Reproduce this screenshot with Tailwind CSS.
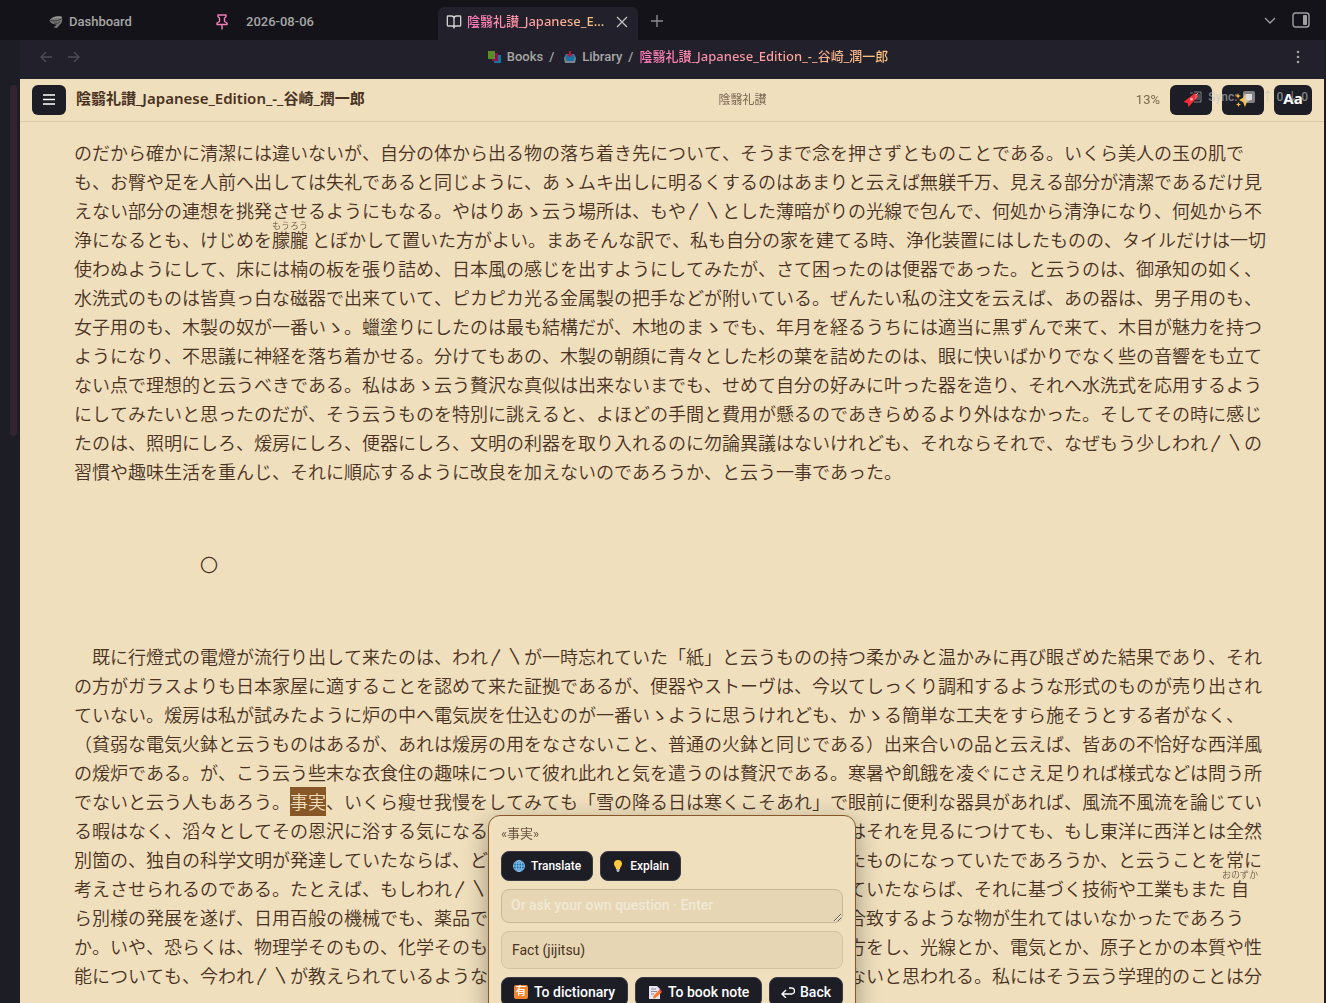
<!DOCTYPE html>
<html lang="ja">
<head>
    <meta charset="UTF-8">
    <meta name="viewport" content="width=device-width, initial-scale=1.0">
    <title>陰翳礼讃_Japanese_Edition_-_谷崎_潤一郎</title>
    <script src="https://cdn.jsdelivr.net/npm/@tailwindcss/browser@4"></script>
</head>
<body class="h-screen overflow-hidden bg-[#1d1d26] font-['Roboto','Noto_Sans_CJK_JP',sans-serif] text-[#a6a6a6]">
    <div class="h-full flex flex-col">
        <!-- Tab bar -->
        <header class="h-10 shrink-0 flex items-end bg-[#141319] text-[13px] font-medium">
            <a href="#" class="w-[167px] h-9 ml-[49px] flex items-center gap-[6px]">
                <svg class="w-[14px] h-[14px]" viewBox="0 0 14 14">
                    <path d="M.5 5.500C2 2 7 .5 13 1.500c.5 4 0 7-2.500 8.500L8 13l-3.500-.5L8 9.500C5 9.500 1.500 8.500.5 5.500z" fill="#777"/>
                    <path d="M1.500 5.500c3 .8 7 .8 11-1.500M5 8c2 .5 4 .5 6-1" stroke="#3a3a3e" fill="none"/>
                    <path d="M4 3.300c2-1.200 5-1.300 8-1" stroke="#aaa" fill="none"/>
                </svg>
                Dashboard
            </a>
            <a href="#" class="w-[222px] h-9 flex items-center gap-[18px]">
                <svg class="w-[12px] h-[16px]" viewBox="0 0 12 16" fill="none" stroke="#f27fb8" stroke-width="1.400" stroke-linejoin="round" stroke-linecap="round">
                    <path d="M2 1h8v1.800L8.500 4v3.500L11 9v1.500H1V9l2.500-1.500V4L2 2.800zM6 10.500V15"/>
                </svg>
                2026-08-06
            </a>
            <div class="w-[200px] h-[33px] px-2 pb-1 flex items-center rounded-t-md bg-[#22212b]">
                <svg class="w-4 h-4 mr-[5px] shrink-0" viewBox="0 0 24 24" fill="none" stroke="#cfcfcf" stroke-width="2" stroke-linejoin="round" stroke-linecap="round">
                    <path d="M12 6v15M3 18a1 1 0 0 1-1-1V4a1 1 0 0 1 1-1h5a4 4 0 0 1 4 4 4 4 0 0 1 4-4h5a1 1 0 0 1 1 1v13a1 1 0 0 1-1 1h-6a3 3 0 0 0-3 3 3 3 0 0 0-3-3z"/>
                </svg>
                <a href="#" class="w-[138px] truncate font-['Noto_Sans','Noto_Sans_CJK_JP',sans-serif] bg-linear-to-r from-[#ff79b9] to-[#ffc57f] bg-clip-text text-transparent">陰翳礼讃_Japanese_Edition_-_谷崎_潤一郎</a>
                <button aria-label="Close tab" class="ml-auto">
                    <svg class="w-4 h-4" viewBox="0 0 16 16" stroke="#c0c0c0" stroke-width="1.300"><path d="M3 3l10 10M13 3L3 13"/></svg>
                </button>
            </div>
            <button aria-label="New tab" class="h-[38px] px-3">
                <svg class="w-[14px] h-[14px]" viewBox="0 0 14 14" stroke="#8b8b90" stroke-width="1.400"><path d="M7 1v12M1 7h12"/></svg>
            </button>
            <div class="h-10 ml-auto pr-4 flex items-center gap-4">
                <button aria-label="Tab list">
                    <svg class="w-3 h-3" viewBox="0 0 12 12" fill="none" stroke="#a0a0a0" stroke-width="1.300"><path d="M1 4l5 5 5-5"/></svg>
                </button>
                <button aria-label="Toggle sidebar">
                    <svg class="w-[18px] h-4" viewBox="0 0 18 16" fill="none" stroke="#a0a0a0" stroke-width="1.400">
                        <rect x="1" y="1" width="16" height="14" rx="2.500"/>
                        <rect x="11" y="3" width="4" height="10" rx="1" fill="#a0a0a0" stroke="none"/>
                    </svg>
                </button>
            </div>
        </header>

        <div class="flex-1 min-h-0 flex">
            <!-- Left rail -->
            <div class="w-5 shrink-0 flex justify-end items-start pt-[45px] pr-[3px]">
                <div class="w-[7px] h-[351px] rounded-full bg-[#33222f]"></div>
            </div>

            <div class="relative flex-1 min-w-0 flex flex-col mr-[2px]">
                <!-- Breadcrumbs -->
                <nav class="h-[39px] shrink-0 px-5 pb-[6px] flex items-center bg-[#22212b] text-[13px] font-medium">
                    <div class="w-48 flex gap-4">
                        <button aria-label="Back">
                            <svg class="w-3 h-3" viewBox="0 0 12 12" fill="none" stroke="#4d4c56" stroke-width="1.300"><path d="M12 6H1M6 1L1 6l5 5"/></svg>
                        </button>
                        <button aria-label="Forward">
                            <svg class="w-3 h-3" viewBox="0 0 12 12" fill="none" stroke="#4d4c56" stroke-width="1.300"><path d="M0 6h11M6 1l5 5-5 5"/></svg>
                        </button>
                    </div>
                    <div class="flex-1 flex justify-center items-center gap-[6px]">
                        <svg class="w-[13px] h-3" viewBox="0 0 13 12">
                            <path d="M6 4h7v8H6z" fill="#1573a5"/>
                            <path d="M4 2h6v8H4z" fill="#8c1248"/>
                            <path d="M0 0h7v8H0z" fill="#5b8c2a"/>
                        </svg>
                        <a href="#">Books</a>
                        <span>/</span>
                        <svg class="w-3 h-3 ml-1" viewBox="0 0 12 12">
                            <path d="M2 3h8l2 4-1 5H1L0 7z" fill="#7c858c"/>
                            <path d="M1.500 3.500h9V8L9 10H3L1.500 8z" fill="#1573a5"/>
                            <path d="M5 0h2v3h2L6 6.500 3 3h2z" fill="#b5173f"/>
                        </svg>
                        <a href="#">Library</a>
                        <span>/</span>
                        <span class="font-['Noto_Sans','Noto_Sans_CJK_JP',sans-serif] bg-linear-to-r from-[#ff79b9] to-[#ffc57f] bg-clip-text text-transparent">陰翳礼讃_Japanese_Edition_-_谷崎_潤一郎</span>
                    </div>
                    <div class="w-40 flex justify-end">
                        <button aria-label="More options">
                            <svg class="w-3 h-[14px]" viewBox="0 0 12 14" fill="#a0a0a0"><circle cx="6" cy="2" r="1.300"/><circle cx="6" cy="7" r="1.300"/><circle cx="6" cy="12" r="1.300"/></svg>
                        </button>
                    </div>
                </nav>

                <!-- Reader toolbar -->
                <div class="h-[43px] shrink-0 px-3 flex items-center border-b border-[#d9c8aa] bg-[#efdfbd] text-[#4a3222]">
                    <button aria-label="Contents" class="w-[34px] h-[30px] mr-[10px] flex justify-center items-center rounded-md bg-[#1d1d26]">
                        <svg class="w-3 h-3" viewBox="0 0 12 12" stroke="#fff" stroke-width="1.400"><path d="M0 1h12M0 5.500h12M0 10h12"/></svg>
                    </button>
                    <h1 class="pb-1 text-[15px] leading-5 font-semibold font-['Noto_Sans','Noto_Sans_CJK_JP',sans-serif]">陰翳礼讃_Japanese_Edition_-_谷崎_潤一郎</h1>
                    <span class="flex-1 text-center text-xs opacity-70">陰翳礼讃</span>
                    <div class="relative flex justify-end items-center gap-[10px]">
                        <span class="w-10 text-right text-[13px] opacity-70">13%</span>
                        <button aria-label="Bookmark" class="w-[42px] h-[30px] flex justify-center items-center rounded-md bg-[#1d1d26]">
                            <svg class="w-4 h-4" viewBox="0 0 16 16">
                                <path d="M12 1l3 3.500L5.500 15l-1-4-4-1z" fill="#fb2c36"/>
                                <circle cx="8.500" cy="7" r="1.500" fill="#ffb0a8"/>
                                <path d="M13 3l2-2" stroke="#e8b090"/>
                            </svg>
                        </button>
                        <button aria-label="Highlights" class="w-[42px] h-[30px] flex justify-center items-center rounded-md bg-[#1d1d26]">
                            <svg class="w-4 h-4" viewBox="0 0 16 16" fill="#fbc13a">
                                <path d="M10 1l1.800 4.700L16 8l-4.200 2.300L10 15l-1.800-4.700L4 8l4.200-2.300z"/>
                                <path d="M3 1l.8 2.200L6 4l-2.200.8L3 7l-.8-2.200L0 4l2.200-.8zM3.500 10l.7 1.800L6 12.500l-1.800.7-.7 1.800-.7-1.800-1.800-.7 1.800-.7z"/>
                            </svg>
                        </button>
                        <button class="w-[38px] h-[30px] rounded-md bg-[#1d1d26] text-[15px] leading-5 pb-1 font-bold font-['Noto_Sans',sans-serif] text-white">Aa</button>
                        <!-- Sync status overlay -->
                        <div class="absolute right-1 top-1 flex items-center gap-[6px] text-xs font-medium text-[#c4c4c4]/60 whitespace-nowrap pointer-events-none">
                            <svg class="w-3 h-3" viewBox="0 0 12 12" fill="none" stroke="currentColor"><path d="M4 1h7v10H4M5 4h5M5 6h5M5 8h5M0 2h3"/></svg>
                            <span>Sync:</span>
                            <svg class="w-3 h-3" viewBox="0 0 12 12" fill="currentColor"><rect width="12" height="12" rx="2"/><rect x="3" y="3" width="6" height="6" fill="#ddd"/></svg>
                            <span>↑ 0 ↓ 0</span>
                        </div>
                    </div>
                </div>

                <!-- Page text -->
                <main lang="ja" class="flex-1 min-h-0 overflow-hidden pt-4 px-[54px] bg-[#efdfbd] text-[18px] leading-[29px] font-[350] font-['Noto_Sans_CJK_JP',sans-serif] [font-kerning:none] [font-feature-settings:'ccmp'_0,'liga'_0] [text-spacing-trim:space-all] text-[#4a3222]">
                    <p>のだから確かに清潔には違いないが、自分の体から出る物の落ち着き先について、そうまで念を押さずとものことである。いくら美人の玉の肌でも、お臀や足を人前へ出しては失礼であると同じように、あゝムキ出しに明るくするのはあまりと云えば無躾千万、見える部分が清潔であるだけ見えない部分の連想を挑発させるようにもなる。やはりあゝ云う場所は、もや〳〵とした薄暗がりの光線で包んで、何処から清浄になり、何処から不浄になるとも、けじめを<ruby>朦朧<rt class="text-[9px] leading-[9px] opacity-80">もうろう</rt></ruby> とぼかして置いた方がよい。まあそんな訳で、私も自分の家を建てる時、浄化装置にはしたものの、タイルだけは一切使わぬようにして、床には楠の板を張り詰め、日本風の感じを出すようにしてみたが、さて困ったのは便器であった。と云うのは、御承知の如く、水洗式のものは皆真っ白な磁器で出来ていて、ピカピカ光る金属製の把手などが附いている。ぜんたい私の注文を云えば、あの器は、男子用のも、女子用のも、木製の奴が一番いゝ。蠟塗りにしたのは最も結構だが、木地のまゝでも、年月を経るうちには適当に黒ずんで来て、木目が魅力を持つようになり、不思議に神経を落ち着かせる。分けてもあの、木製の朝顔に青々とした杉の葉を詰めたのは、眼に快いばかりでなく些の音響をも立てない点で理想的と云うべきである。私はあゝ云う贅沢な真似は出来ないまでも、せめて自分の好みに叶った器を造り、それへ水洗式を応用するようにしてみたいと思ったのだが、そう云うものを特別に誂えると、よほどの手間と費用が懸るのであきらめるより外はなかった。そしてその時に感じたのは、照明にしろ、煖房にしろ、便器にしろ、文明の利器を取り入れるのに勿論異議はないけれども、それならそれで、なぜもう少しわれ〳〵の習慣や趣味生活を重んじ、それに順応するように改良を加えないのであろうか、と云う一事であった。</p>
                    <p class="mt-16 mb-[63px] pl-[126px]">〇</p>
                    <p>　既に行燈式の電燈が流行り出して来たのは、われ〳〵が一時忘れていた「紙」と云うものの持つ柔かみと温かみに再び眼ざめた結果であり、それの方がガラスよりも日本家屋に適することを認めて来た証拠であるが、便器やストーヴは、今以てしっくり調和するような形式のものが売り出されていない。煖房は私が試みたように炉の中へ電気炭を仕込むのが一番いゝように思うけれども、かゝる簡単な工夫をすら施そうとする者がなく、（貧弱な電気火鉢と云うものはあるが、あれは煖房の用をなさないこと、普通の火鉢と同じである）出来合いの品と云えば、皆あの不恰好な西洋風の煖炉である。が、こう云う些末な衣食住の趣味について彼れ此れと気を遣うのは贅沢である。寒暑や飢餓を凌ぐにさえ足りれば様式などは問う所でないと云う人もあろう。<mark class="pt-px pb-[2px] bg-[#875728] text-[#efdfbd]">事実</mark>、いくら瘦せ我慢をしてみても「雪の降る日は寒くこそあれ」で眼前に便利な器具があれば、風流不風流を論じている暇はなく、滔々としてその恩沢に浴する気になるのは、已むを得ない趨勢であるけれども、私はそれを見るにつけても、もし東洋に西洋とは全然別箇の、独自の科学文明が発達していたならば、どんなにわれ〳〵の社会の有様が今日とは違ったものになっていたであろうか、と云うことを常に考えさせられるのである。たとえば、もしわれ〳〵がわれ〳〵独自の物理学を有し、化学を有していたならば、それに基づく技術や工業もまた<ruby>自<rt class="text-[9px] leading-[9px] opacity-80">おのずか</rt></ruby>ら別様の発展を遂げ、日用百般の機械でも、薬品でも、工藝品でも、もっとわれ〳〵の国民性に合致するような物が生れてはいなかったであろうか。いや、恐らくは、物理学そのもの、化学そのものの原理さえも、西洋人の見方とは違った見方をし、光線とか、電気とか、原子とかの本質や性能についても、今われ〳〵が教えられているようなものとは、異った姿を露呈していたかも知れないと思われる。私にはそう云う学理的のことは分</p>
                </main>

                <!-- Selection popup -->
                <div class="absolute left-[468px] top-[775px] w-[368px] px-3 pt-2 pb-3 flex flex-col gap-2 rounded-xl border border-[#875728] bg-[#efdfbd] shadow-[0_8px_24px_rgba(0,0,0,0.35)] text-[13px] text-[#4a3222]">
                    <div class="h-[19px] text-[13px] leading-[19px] opacity-80">«事実»</div>
                    <div class="flex gap-[7px] text-xs font-medium text-white">
                        <button class="h-[30px] px-[11px] flex items-center gap-[6px] rounded-lg border border-[#3b3a44] bg-[#1d1d26] whitespace-nowrap">
                            <svg class="w-3 h-3" viewBox="0 0 12 12" fill="#1b6fae" stroke="#9bd0f5" stroke-width=".8"><circle cx="6" cy="6" r="5.500"/><path d="M6 .5v11M.5 6h11M1.500 3h9M1.500 9h9" /><ellipse cx="6" cy="6" rx="2.800" ry="5.500" fill="none"/></svg>
                            Translate
                        </button>
                        <button class="h-[30px] px-[11px] flex items-center gap-[6px] rounded-lg border border-[#3b3a44] bg-[#1d1d26] whitespace-nowrap">
                            <svg class="w-3 h-3" viewBox="0 0 12 12"><path d="M6 0a4 4 0 0 1 4 4c0 2-2 3-2 5H4c0-2-2-3-2-5a4 4 0 0 1 4-4z" fill="#ffc93c"/><path d="M4.500 9h3v2l-1 1h-1l-1-1z" fill="#b9b9c0"/></svg>
                            Explain
                        </button>
                    </div>
                    <textarea aria-label="Question" rows="1" placeholder="Or ask your own question · Enter" class="h-[34px] px-[9px] py-[5px] rounded-lg border border-[#c8b898] bg-[#e6d6b4] text-[14px] leading-5 font-medium placeholder:text-[#f2e8d5]"></textarea>
                    <div class="h-[38px] px-[10px] flex items-center rounded-lg border border-[#d3c3a2] bg-[#e6d6b4] text-[14px]">Fact (jijitsu)</div>
                    <div class="flex justify-between text-[14px] font-medium text-white">
                        <button class="h-[30px] px-3 flex items-center gap-[6px] rounded-lg border border-[#3b3a44] bg-[#1d1d26] whitespace-nowrap">
                            <span class="w-[14px] h-[14px] rounded-xs bg-[#f6822b] text-[11px] leading-[14px]">有</span>
                            To dictionary
                        </button>
                        <button class="h-[30px] px-3 flex items-center gap-[6px] rounded-lg border border-[#3b3a44] bg-[#1d1d26] whitespace-nowrap">
                            <svg class="w-[14px] h-[14px]" viewBox="0 0 14 14"><path d="M1 1h8l3 3v10H1z" fill="#e8e4f0"/><path d="M3 4h5M3 6.500h6M3 9h3" stroke="#8d8aa8"/><path d="M11 5l2.500 2.500L7.500 13 5 13.500l.5-2.500z" fill="#fb7a2c"/><path d="M11 5l1-1 2 2.500-.5 1z" fill="#f0325a"/></svg>
                            To book note
                        </button>
                        <button class="h-[30px] px-[11px] flex items-center gap-[5px] rounded-lg border border-[#3b3a44] bg-[#1d1d26] whitespace-nowrap">
                            <svg class="w-[14px] h-[11px]" viewBox="0 0 14 11" fill="none" stroke="#fff" stroke-width="1.400"><path d="M1 7h9.500a2.500 2.500 0 0 0 0-6H8M5 3L1 7l4 4"/></svg>
                            Back
                        </button>
                    </div>
                </div>
            </div>
        </div>
    </div>
</body>
</html>
